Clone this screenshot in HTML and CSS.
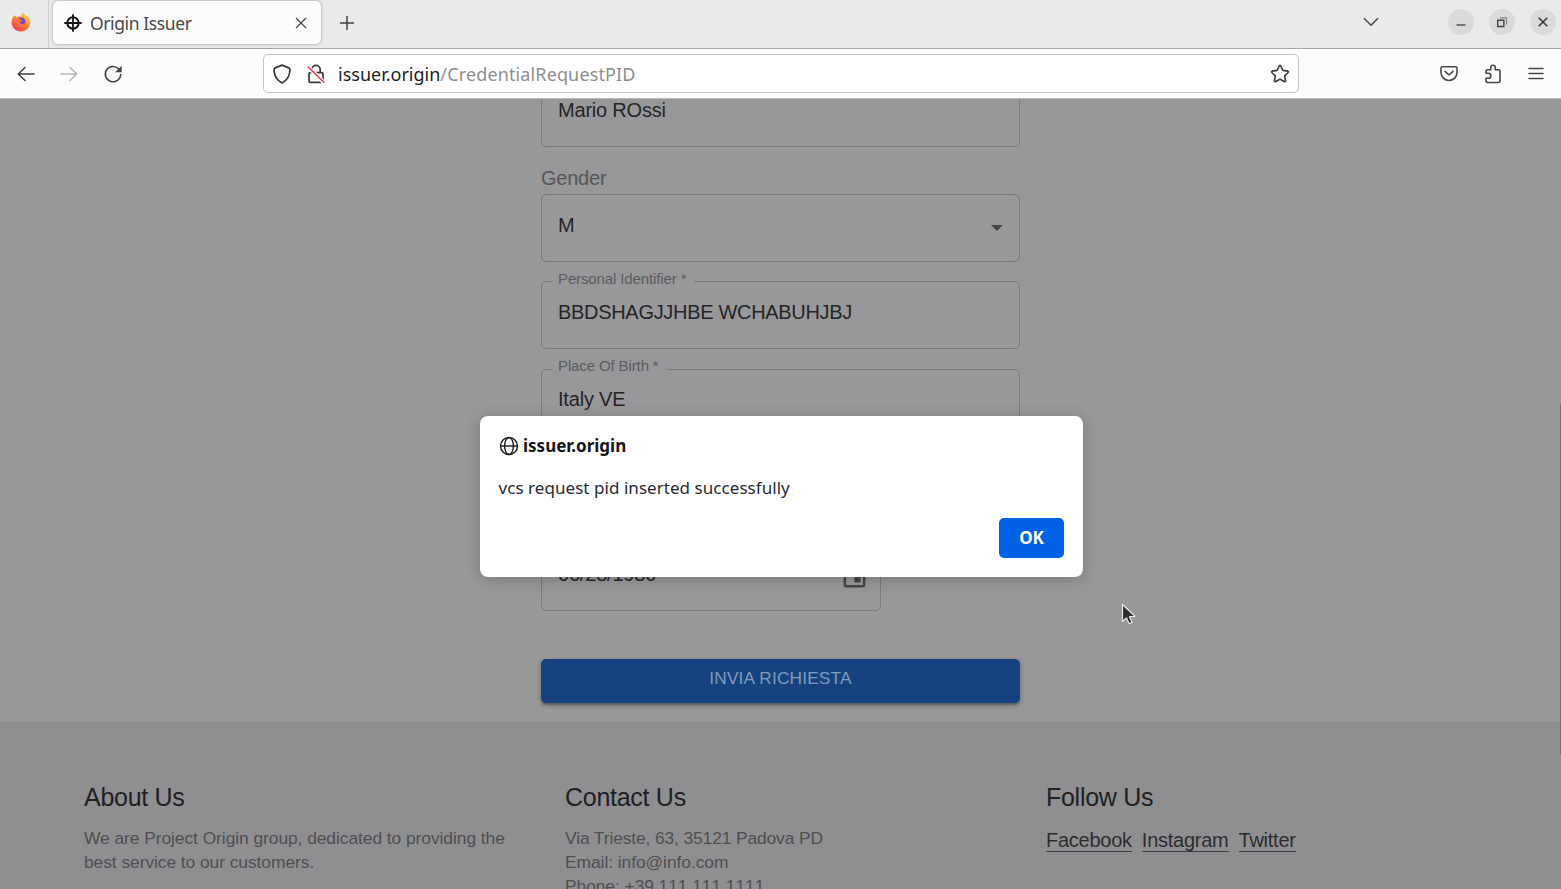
FILE: index.html
```html
<!DOCTYPE html>
<html lang="it">
<head>
<meta charset="utf-8">
<title>Origin Issuer</title>
<link rel="stylesheet" href="styles.css">
</head>
<body>
<div class="window">
  <header class="tabbar">
    <div class="brand">
      <svg width="20" height="20" viewBox="0 0 20 20">
        <defs>
          <linearGradient id="fire" x1="0.9" y1="0" x2="0.2" y2="1"><stop offset="0" stop-color="#ffe048"/><stop offset=".45" stop-color="#ff9132"/><stop offset="1" stop-color="#f5304f"/></linearGradient>
        </defs>
        <path fill="url(#fire)" d="M3.3 3.2 5.8 5.300 C7 3.800 8.500 4 10 4.500 C10 2.500 11 1.200 12.600.5 C13 3 16 4 17.500 5.400 C18.600 6.500 19.400 8.500 19.300 10.800 C19 15.800 15 19.500 10 19.500 C4.800 19.500.6 15.500.6 10.200 C.6 7.500 1.800 5.500 3.300 3.200Z"/>
        <circle cx="10.300" cy="9.800" r="4.300" fill="#7747cf"/>
        <path fill="#ff7139" d="M4.500 7.500c2-1.500 3.500-.8 4.700.1l2.300.5c-.3 1.200-1.800 1.300-2.400 1.900-.7.900.1 2 1.500 2.100 1.700.1 2.800-.8 3.900-.3-1 2-3 3-5.200 2.500C6 13.600 4.300 11 4.500 7.500z"/>
      </svg>
    </div>
    <div class="tab">
      <svg width="18" height="18" viewBox="0 0 18 18" fill="none" stroke="#151515"><circle cx="9" cy="9" r="5.700" stroke-width="2"/><path stroke-width="1.800" d="M9 .3v17.400M.3 9h17.400"/></svg>
      <span class="tab-title">Origin Issuer</span>
      <svg class="tab-close" width="12" height="12" viewBox="0 0 12 12" fill="none" stroke="#4a4a4a" stroke-width="1.200"><path d="M1 1l10 10M11 1 1 11"/></svg>
    </div>
    <svg class="new-tab" width="16" height="16" viewBox="0 0 16 16" fill="none" stroke="#414141" stroke-width="1.500"><path d="M8 1v14M1 8h14"/></svg>
    <div class="window-tools">
      <svg class="tab-list" width="16" height="10" viewBox="0 0 16 10" fill="none" stroke="#484848" stroke-width="1.500" stroke-linecap="round" stroke-linejoin="round"><path d="M1.300 1.500 8 8.200l6.700-6.700"/></svg>
      <span class="round"><svg width="12" height="12" viewBox="0 0 12 12" fill="none" stroke="#444" stroke-width="1.400"><path d="M1.500 9h9"/></svg></span>
      <span class="round"><svg width="12" height="12" viewBox="0 0 12 12" fill="none" stroke="#444"><path stroke-width="1.400" d="M1.700 4.300h6.200v6.200H1.700z"/><path stroke="#858585" stroke-width="1.100" d="M4 1.900h6.500v6.600"/></svg></span>
      <span class="round"><svg width="12" height="12" viewBox="0 0 12 12" fill="none" stroke="#3c3c3c" stroke-width="1.600"><path d="M1.700 1.700l8.600 8.600M10.300 1.700l-8.600 8.600"/></svg></span>
    </div>
  </header>

  <nav class="toolbar">
    <div class="history">
      <svg width="18" height="16" viewBox="0 0 18 16" fill="none" stroke="#424242" stroke-width="1.500" stroke-linecap="round" stroke-linejoin="round"><path d="M8 1.500 1.200 8 8 14.500M1.200 8h15.800"/></svg>
      <svg width="18" height="16" viewBox="0 0 18 16" fill="none" stroke="#b5b5b5" stroke-width="1.500" stroke-linecap="round" stroke-linejoin="round"><path d="M10 1.500 16.800 8 10 14.500M16.800 8H1"/></svg>
      <svg width="20" height="20" viewBox="0 0 20 20" fill="none" stroke="#424242" stroke-width="1.500" stroke-linecap="round"><path d="M15.500 4.700A7.700 7.700 0 1 0 17.700 10.500"/><path fill="#424242" stroke="none" d="M18.700 1.800v6.400h-6.600z"/></svg>
    </div>
    <div class="urlbar">
      <svg class="shield" width="20" height="20" viewBox="0 0 20 20" fill="none" stroke="#3a3a3a" stroke-width="1.700" stroke-linejoin="round"><path d="M10 1.100 16.700 3.900q1.400.6 1.300 2.100C17.700 12 15 16.500 10 19 5 16.500 2.300 12 2 6q-.1-1.500 1.300-2.100z"/></svg>
      <svg class="lock" width="20" height="20" viewBox="0 0 20 20" fill="none"><path stroke="#3a3a3a" stroke-width="1.700" d="M5.800 8.500V5.500a4.200 4.200 0 0 1 8.400 0v3M4.500 8.600h11q1.500 0 1.500 1.500v6.800q0 1.500-1.500 1.500h-11Q3 18.400 3 16.900v-6.800q0-1.500 1.500-1.500z"/><path stroke="#fff" stroke-width="4" d="M1.500 2.500 17.700 18.200"/><path stroke="#e3395b" stroke-width="1.600" d="M1.700 2.500 18.300 18.700"/></svg>
      <span class="url"><span class="host">issuer.origin</span><span class="path">/CredentialRequestPID</span></span>
      <svg class="star" width="20" height="20" viewBox="0 0 20 20" fill="none" stroke="#414141" stroke-width="1.700" stroke-linejoin="round"><path d="M9.200 2q.8-1.400 1.600 0L12.900 6.400 17.600 7.100q1.400.3.500 1.400L14.700 11.900 15.500 16.700q.1 1.500-1.200.9L10 15.300 5.700 17.600q-1.300.6-1.200-.9L5.300 11.900 1.900 8.500q-.9-1.100.5-1.400L7.100 6.400z"/></svg>
    </div>
    <div class="actions">
      <svg width="18" height="18" viewBox="0 0 18 18" fill="none" stroke="#484848" stroke-width="1.600" stroke-linecap="round" stroke-linejoin="round"><path d="M2.500 1.800h13q1.500 0 1.500 1.500v4.200a8 8 0 0 1-16 0V3.300q0-1.500 1.500-1.500z"/><path d="M5 6.300 9 10l4-3.700"/></svg>
      <svg width="20" height="20" viewBox="0 0 20 20" fill="none" stroke="#484848" stroke-width="1.600" stroke-linejoin="round"><path d="M3 9.200V7.500q0-1.700 1.700-1.700h3.100V3.500a2.200 2.200 0 0 1 4.400 0v2.300h3.100q1.700 0 1.700 1.700v9.300q0 1.700-1.700 1.700H4.700Q3 18.500 3 16.800v-2.500h2.300a2.500 2.500 0 0 0 0-5.100z"/></svg>
      <svg width="16" height="14" viewBox="0 0 16 14" fill="none" stroke="#484848" stroke-width="1.500" stroke-linecap="round"><path d="M1 1.500h14M1 6.500h14M1 11.500h14"/></svg>
    </div>
  </nav>

  <main class="page">
    <form class="form">
      <div class="field field-name"><span class="value">Mario ROssi</span></div>
      <label class="group-label">Gender</label>
      <div class="field field-select"><span class="value">M</span><svg width="12" height="6" viewBox="0 0 12 6" fill="#454547"><path d="M0 0h12L6 6z"/></svg></div>
      <div class="field"><span class="label">Personal Identifier<i>*</i></span><span class="value">BBDSHAGJJHBE WCHABUHJBJ</span></div>
      <div class="field field-place"><span class="label">Place Of Birth<i>*</i></span><span class="value">Italy VE</span></div>
      <div class="field field-date"><span class="value">06/28/1980</span><svg width="29" height="29" viewBox="0 0 24 24" fill="#454547"><path d="M17 12h-5v5h5v-5zM16 1v2H8V1H6v2H5c-1.110 0-1.990.9-1.990 2L3 19c0 1.100.89 2 2 2h14c1.100 0 2-.9 2-2V5c0-1.100-.9-2-2-2h-1V1h-2zm3 18H5V8h14v11z"/></svg></div>
      <button class="submit" type="button">INVIA RICHIESTA</button>
    </form>
    <footer class="footer">
      <section><h2>About Us</h2><p>We are Project Origin group, dedicated to providing the<br>best service to our customers.</p></section>
      <section><h2>Contact Us</h2><p><span class="address">Via Trieste, 63, 35121 Padova PD</span><br>Email: info@info.com<br><span class="phone">Phone: +39 111 111 1111</span></p></section>
      <section><h2>Follow Us</h2><div class="links"><a>Facebook</a><a>Instagram</a><a>Twitter</a></div></section>
    </footer>
    <div class="scroll-thumb"></div>
  </main>

  <div class="dialog" role="alertdialog">
    <div class="dialog-title">
      <svg width="20" height="20" viewBox="0 0 20 20" fill="none" stroke="#1c1c1e" stroke-width="1.400"><circle cx="10" cy="10" r="8.500"/><ellipse cx="10" cy="10" rx="4.400" ry="8.500"/><path d="M1.500 10h17"/></svg>
      <span>issuer.origin</span>
    </div>
    <p class="message"><span>vcs request pid inserted successfully</span></p>
    <button class="ok" type="button">OK</button>
  </div>
  <svg class="cursor" width="16" height="24" viewBox="0 0 16 24"><path fill="#2d2d2f" stroke="#e8e8e8" stroke-width="1.200" stroke-linejoin="round" d="M1.500 1.500v17l4-3.600 2.700 5.800 2.900-1.300-2.600-5.700 5.500-.4z"/></svg>
</div>
</body>
</html>
```
FILE: styles.css
```css
* { box-sizing: border-box; }
body { margin: 0; font-family: "Liberation Sans", Arial, sans-serif; }
svg { display: block; flex: none; }
.window { position: relative; width: 1561px; height: 889px; overflow: hidden; display: flex; flex-direction: column; }

.tabbar { height: 49px; flex: none; display: flex; background: #eaeaea; border-bottom: 1px solid #a5a5a7; font-family: "Noto Sans", sans-serif; }
.brand { width: 49px; border-right: 1px solid #c9cfd6; padding: 12px 0 0 11px; }
.tab { width: 268px; height: 43px; margin: 1px 0 0 4px; padding: 0 14px 0 11px; display: flex; align-items: center; background: #fcfcfc; border-radius: 5px; box-shadow: 0 0 3px rgba(0,0,0,.4); }
.tab-title { margin-left: 8px; font-size: 17.500px; letter-spacing: -.4px; color: #4a4a4a; white-space: nowrap; }
.tab-close { margin-left: auto; }
.new-tab { margin: 15px 0 0 18px; }
.window-tools { margin: 9px 5px 0 auto; display: flex; gap: 15px; }
.tab-list { margin: 8px 54px 0 0; }
.round { width: 26px; height: 26px; border-radius: 50%; background: #dadada; display: flex; align-items: center; justify-content: center; }

.toolbar { height: 49px; flex: none; display: flex; align-items: center; background: #fcfcfc; font-family: "Noto Sans", sans-serif; }
.history { width: 263px; padding-left: 17px; display: flex; align-items: center; gap: 25px; }
.urlbar { width: 1036px; height: 39px; padding: 0 8px; display: flex; align-items: center; background: #fff; border: 1px solid #c3c3c5; border-radius: 5px; }
.lock { margin-left: 14px; }
.url { margin-left: 12px; font-size: 18px; line-height: 24px; white-space: nowrap; }
.host { color: #1d1d1f; }
.path { color: #8e8e90; letter-spacing: .13px; }
.star { margin-left: auto; }
.actions { margin-left: 141px; display: flex; align-items: center; gap: 25px; }

.page { position: relative; flex: 1; min-height: 0; display: flex; flex-direction: column; background: #98989a; border-top: 1px solid #b9b9b9; }
.form { width: 479px; height: 623px; flex: none; margin-left: 541px; overflow: visible; display: flex; flex-direction: column; color: #252528; }
.field { position: relative; height: 68px; flex: none; padding: 18px 16px 0; display: flex; align-items: flex-start; border: 1px solid #7b7b7d; border-radius: 5px; margin-bottom: 19.500px; }
.value { font-size: 20px; line-height: 24px; letter-spacing: -.31px; white-space: nowrap; }
.field-name { height: 48px; padding-top: 0; border-top: 0; border-radius: 0 0 5px 5px; margin: 0 0 19px; }
.field-name .value { line-height: 23px; letter-spacing: -.2px; }
.group-label { height: 28px; line-height: 24px; font-size: 20px; letter-spacing: -.23px; color: #555557; }
.field-select { margin-bottom: 19px; }
.field-select svg { margin: 12px 0 0 auto; }
.label { position: absolute; left: 10px; top: -12px; padding: 0 8px 0 6px; background: #98989a; color: #5b5b5d; font-size: 15px; line-height: 18px; letter-spacing: -.12px; white-space: nowrap; }
.label i { font-style: normal; margin-left: 4px; }
.field-place { padding-top: 17px; }
.field-place .label { top: -13px; }
.field-place .value { letter-spacing: -.2px; }
.field-date { width: 340px; margin-top: 87px; margin-bottom: 48px; }
.field-date .value { letter-spacing: -.2px; }
.field-date svg { margin: 0 -5px 0 auto; }
.submit { height: 44px; flex: none; border: 0; border-radius: 5px; padding: 0 0 7px; background: #16437f; color: #7f9bbd; font: 17.300px/24px "Liberation Sans", Arial, sans-serif; letter-spacing: .17px; box-shadow: 0 3px 2px -1px rgba(0,0,0,.2), 0 2px 5px rgba(0,0,0,.3); }

.footer { flex: 1; min-height: 0; overflow: hidden; display: grid; grid-template-columns: 481px 481px 1fr; padding: 59px 0 0 84px; background: #8f8f91; }
h2 { margin: 0; font-size: 25px; line-height: 32px; font-weight: 400; letter-spacing: -.28px; color: #202022; }
.footer p { margin: 13px 0 0; font-size: 17.400px; line-height: 24px; letter-spacing: -.06px; color: #4e4e50; white-space: nowrap; }
.address { letter-spacing: -.12px; }
.phone { font-kerning: none; }
.links { margin-top: 17px; display: flex; gap: 10px; font-size: 20px; line-height: 21px; letter-spacing: -.25px; color: #2c2c2f; }
.links a { height: 22px; border-bottom: 1px solid #3e3e42; }
.scroll-thumb { position: absolute; right: 0; top: 305px; width: 1px; height: 350px; background: #727274; }

.dialog { position: absolute; left: 480px; top: 416px; width: 603px; height: 161px; padding: 20px 19px 20px 18.500px; display: flex; flex-direction: column; background: #fff; border-radius: 8px; box-shadow: 0 2px 16px rgba(0,0,0,.22); font-family: "Noto Sans", sans-serif; }
.dialog-title { height: 20px; padding-left: .5px; display: flex; align-items: center; gap: 4px; font-size: 17px; line-height: 22px; font-weight: 700; color: #151517; }
.message { margin: 20px 0 0; height: 24px; font-size: 17px; line-height: 24px; letter-spacing: .05px; color: #2a2a32; white-space: nowrap; }
.ok { width: 65px; height: 40px; margin: 18px 0 0 auto; flex: none; border: 0; border-radius: 5px; padding: 0; background: #0060e6; color: #fff; font: 700 17px/40px "Noto Sans", sans-serif; }
.cursor { position: absolute; left: 1121px; top: 603px; }
```
